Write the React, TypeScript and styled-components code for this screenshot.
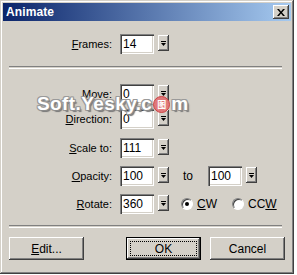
import React from 'react';
import styled, {createGlobalStyle} from 'styled-components';

const GlobalStyle = createGlobalStyle`
  body {
    margin: 0;
    background: #ffffff;
    font-family: "Liberation Sans", Arial, sans-serif;
    font-size: 11px;
    color: #000;
  }
`

const Window = styled.div`
  position: relative;
  width: 294px;
  height: 274px;
  box-sizing: border-box;
  padding: 3px;
  background: #d4d0c8;
  box-shadow: inset -1px -1px #404040, inset 1px 1px #d4d0c8,
  inset -2px -2px #808080, inset 2px 2px #ffffff;
  display: flex;
  flex-direction: column;
`

const TitleBar = styled.div`
  height: 18px;
  display: flex;
  align-items: center;
  justify-content: space-between;
  padding: 0 2px 0 3px;
  background: linear-gradient(to right, #0a246a, #a6caf0);
`

const Title = styled.span`
  color: #fff;
  font-weight: bold;
  font-size: 12px;
  letter-spacing: 0.1px;
`

const CloseButton = styled.div`
  width: 16px;
  height: 14px;
  box-sizing: border-box;
  background: #d4d0c8;
  display: flex;
  align-items: center;
  justify-content: center;
  box-shadow: inset -1px -1px #404040, inset 1px 1px #ffffff,
  inset -2px -2px #808080, inset 2px 2px #d4d0c8;
`

const Row = styled.div<{ $mt: number }>`
  display: flex;
  align-items: flex-start;
  height: 20px;
  margin-top: ${props => props.$mt}px;
`

const Label = styled.div`
  width: 109px;
  margin-right: 8px;
  text-align: right;
  line-height: 20px;
  white-space: nowrap;
`

const U = styled.span`
  text-decoration: underline;
  text-underline-offset: 1px;
`

const Input = styled.div`
  width: 34px;
  height: 20px;
  box-sizing: border-box;
  background: #fff;
  padding: 0 3px;
  line-height: 20px;
  font-size: 12px;
  box-shadow: inset 1px 1px #808080, inset 2px 2px #404040,
  inset -1px -1px #ffffff, inset -2px -2px #d4d0c8;
`

const DropButton = styled.div`
  width: 11px;
  height: 16px;
  margin: 1px 0 0 4px;
  box-sizing: border-box;
  background: #d4d0c8;
  display: flex;
  align-items: center;
  justify-content: center;
  box-shadow: inset -1px -1px #404040, inset 1px 1px #ffffff,
  inset -2px -2px #808080;
`

const Word = styled.span<{ $ml: number; $mr: number }>`
  margin-left: ${props => props.$ml}px;
  margin-right: ${props => props.$mr}px;
  line-height: 20px;
  font-size: 12px;
`

const RadioCircle = styled.span<{ $checked?: boolean; $ml: number }>`
  position: relative;
  width: 12px;
  height: 12px;
  margin: 4px 4px 0 ${props => props.$ml}px;
  box-sizing: border-box;
  border-radius: 50%;
  background: #fff;
  border: 1px solid;
  border-color: #808080 #ffffff #ffffff #808080;
  box-shadow: inset 1px 1px #404040;

  &::after {
    content: "";
    display: ${props => props.$checked ? 'block' : 'none'};
    position: absolute;
    left: 3px;
    top: 3px;
    width: 4px;
    height: 4px;
    border-radius: 50%;
    background: #000;
  }
`

const RadioText = styled.span`
  line-height: 20px;
  font-size: 12px;
`

const Separator = styled.div<{ $mt: number }>`
  height: 1px;
  margin: ${props => props.$mt}px 9px 0 6px;
  border-top: 1px solid #808080;
  border-bottom: 1px solid #ffffff;
`

const ButtonRow = styled.div`
  display: flex;
  margin-top: 9px;
  padding: 0 6px;
  gap: 9px;
`

const Button = styled.div<{ $default?: boolean; $push?: boolean }>`
  position: relative;
  width: 75px;
  height: 23px;
  box-sizing: border-box;
  background: #d4d0c8;
  display: flex;
  align-items: center;
  justify-content: center;
  font-size: 12px;
  margin-left: ${props => props.$push ? 'auto' : '0'};
  border: ${props => props.$default ? '1px solid #000' : 'none'};
  box-shadow: inset -1px -1px #404040, inset 1px 1px #ffffff,
  inset -2px -2px #808080, inset 2px 2px #d4d0c8;
`

const FocusRing = styled.span`
  position: absolute;
  inset: 3px;
  border: 1px dotted #000;
`

const Watermark = styled.div`
  position: absolute;
  left: 37px;
  top: 93px;
  display: flex;
  align-items: center;
  font-family: "Liberation Sans", Arial, sans-serif;
  font-weight: bold;
  font-size: 19px;
  letter-spacing: 0.4px;
  color: #fff;
  text-shadow: 1px 1px 0 #8a8a8a, -1px -1px 0 #9a9a9a, 1px -1px 0 #9a9a9a,
  -1px 1px 0 #9a9a9a, 0 1px 0 #9a9a9a, 0 -1px 0 #9a9a9a, 1px 0 0 #9a9a9a,
  -1px 0 0 #9a9a9a, 2px 2px 1px #777;
`

const Logo = styled.span`
  display: inline-flex;
  align-items: center;
  justify-content: center;
  width: 15px;
  height: 15px;
  margin: 0 1px;
  border-radius: 50%;
  background: #e0787a;
  border: 1px solid #c44;
  color: #fff;
  font-size: 9px;
  text-shadow: none;
  font-family: "Noto Sans CJK SC", sans-serif;
`

const Arrow = () => (
    <svg width="5" height="5" viewBox="0 0 5 5">
        <rect x="0" y="0" width="5" height="1" fill="#000"/>
        <polygon points="0,2 5,2 2.5,5" fill="#000"/>
    </svg>
)

const Combo = ({value}: { value: string }) => (
    <>
        <Input>{value}</Input>
        <DropButton><Arrow/></DropButton>
    </>
)

const App = () => {
    return (
        <>
            <GlobalStyle/>
            <Window>
                <TitleBar>
                    <Title>Animate</Title>
                    <CloseButton>
                        <svg width="8" height="7" viewBox="0 0 8 7">
                            <path d="M0 0 L2 0 L4 2.5 L6 0 L8 0 L5 3.5 L8 7 L6 7 L4 4.5 L2 7 L0 7 L3 3.5 Z" fill="#000"/>
                        </svg>
                    </CloseButton>
                </TitleBar>

                <Row $mt={13}>
                    <Label><U>F</U>rames:</Label>
                    <Combo value="14"/>
                </Row>
                <Separator $mt={12}/>

                <Row $mt={15}>
                    <Label><U>M</U>ove:</Label>
                    <Combo value="0"/>
                </Row>
                <Row $mt={5}>
                    <Label><U>D</U>irection:</Label>
                    <Combo value="0"/>
                </Row>
                <Row $mt={9}>
                    <Label><U>S</U>cale to:</Label>
                    <Combo value="111"/>
                </Row>
                <Row $mt={8}>
                    <Label><U>O</U>pacity:</Label>
                    <Combo value="100"/>
                    <Word $ml={14} $mr={15}>to</Word>
                    <Combo value="100"/>
                </Row>
                <Row $mt={8}>
                    <Label><U>R</U>otate:</Label>
                    <Combo value="360"/>
                    <RadioCircle $checked $ml={12}/>
                    <RadioText><U>C</U>W</RadioText>
                    <RadioCircle $ml={15}/>
                    <RadioText>CC<U>W</U></RadioText>
                </Row>
                <Separator $mt={11}/>

                <ButtonRow>
                    <Button><span><U>E</U>dit...</span></Button>
                    <Button $default $push>OK<FocusRing/></Button>
                    <Button>Cancel</Button>
                </ButtonRow>

                <Watermark>
                    Soft.Yesky.c<Logo>图</Logo>m
                </Watermark>
            </Window>
        </>
    );
};

export default App;
